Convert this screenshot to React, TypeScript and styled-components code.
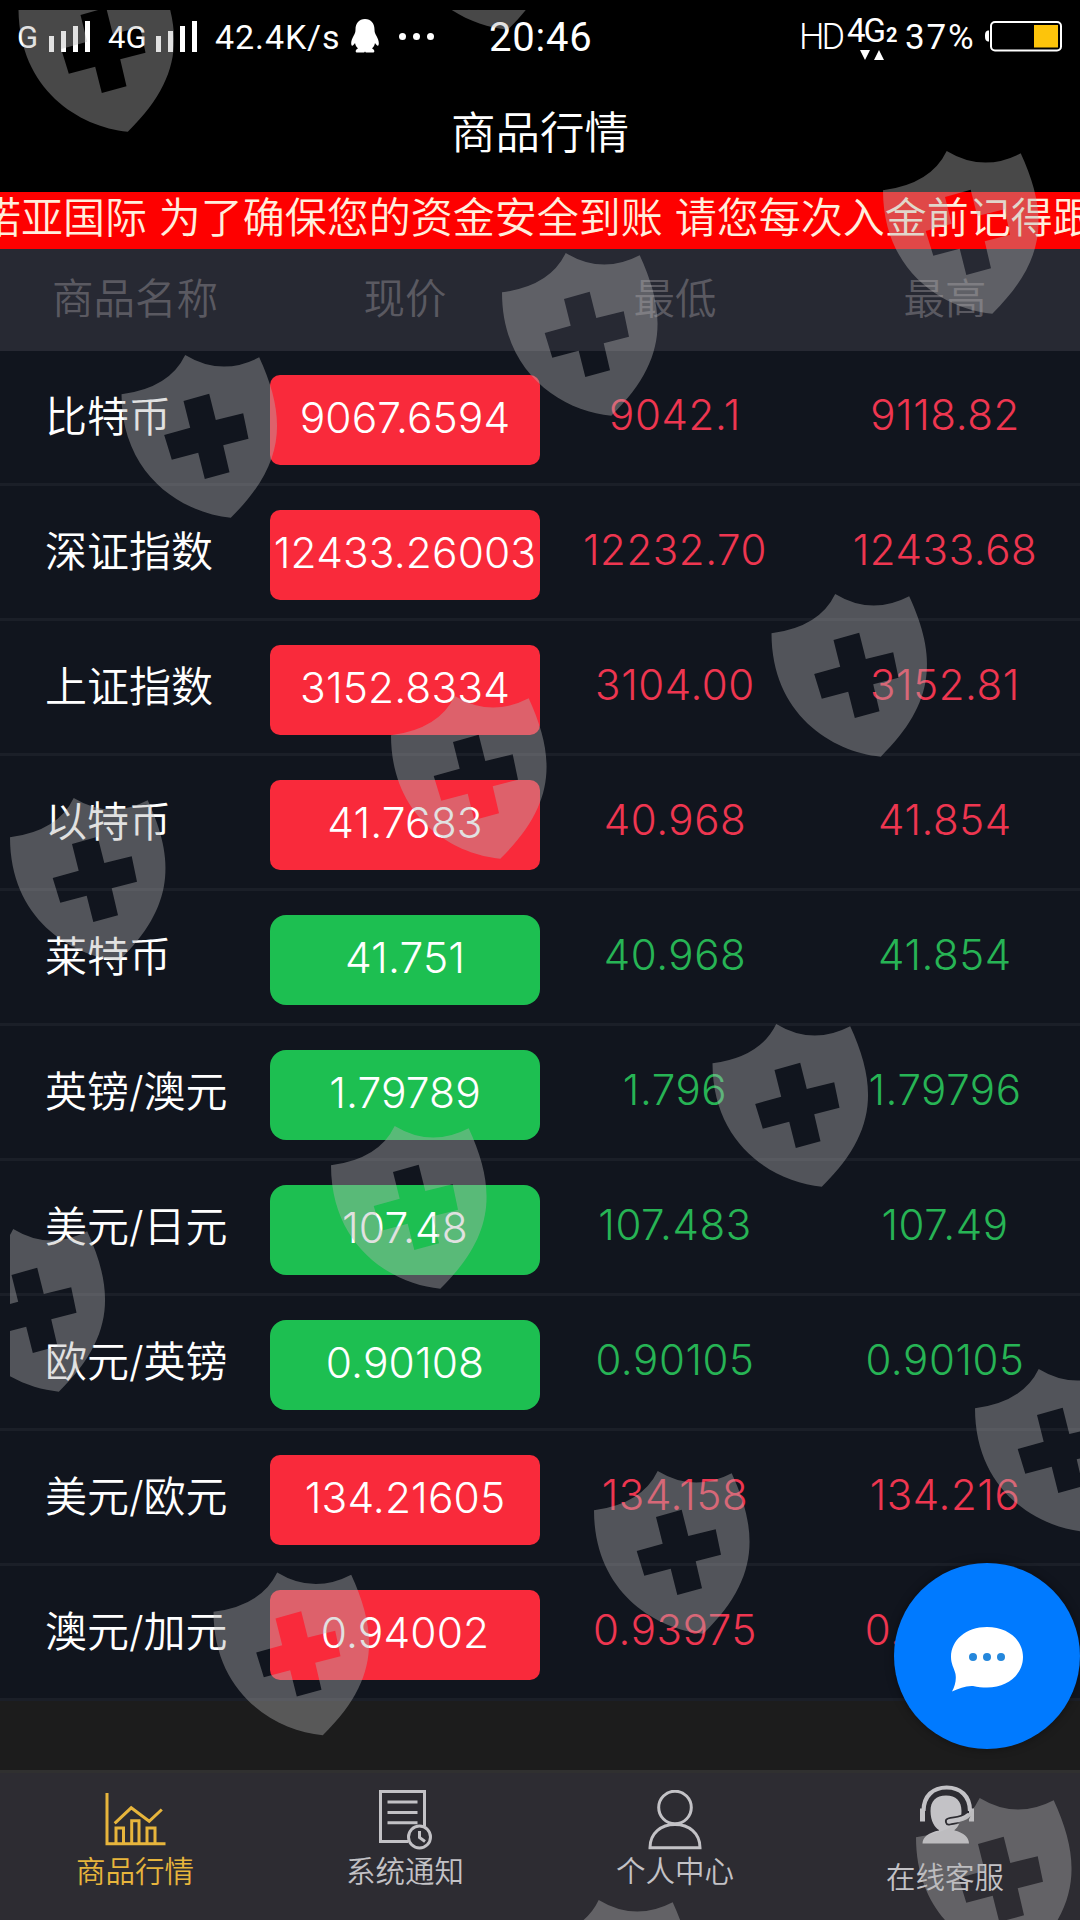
import { createGlobalStyle, styled } from 'styled-components';

type Trend = 'up' | 'down';

type Quote = {
  name: string;
  price: string;
  low: string;
  high: string;
  trend: Trend;
};

const QUOTES: Quote[] = [
  { name: '比特币', price: '9067.6594', low: '9042.1', high: '9118.82', trend: 'up' },
  { name: '深证指数', price: '12433.26003', low: '12232.70', high: '12433.68', trend: 'up' },
  { name: '上证指数', price: '3152.8334', low: '3104.00', high: '3152.81', trend: 'up' },
  { name: '以特币', price: '41.7683', low: '40.968', high: '41.854', trend: 'up' },
  { name: '莱特币', price: '41.751', low: '40.968', high: '41.854', trend: 'down' },
  { name: '英镑/澳元', price: '1.79789', low: '1.796', high: '1.79796', trend: 'down' },
  { name: '美元/日元', price: '107.48', low: '107.483', high: '107.49', trend: 'down' },
  { name: '欧元/英镑', price: '0.90108', low: '0.90105', high: '0.90105', trend: 'down' },
  { name: '美元/欧元', price: '134.21605', low: '134.158', high: '134.216', trend: 'up' },
  { name: '澳元/加元', price: '0.94002', low: '0.93975', high: '0.94012', trend: 'up' },
];

// top-left corner of every watermark badge
const SHIELDS = [
  [18.5, -31],
  [398.5, -133],
  [883, 151],
  [502, 253],
  [121.5, 355],
  [771.5, 594],
  [391, 696],
  [10, 798],
  [712.5, 1024],
  [331, 1126],
  [-50.5, 1229],
  [975, 1369],
  [594, 1471],
  [213.5, 1572.5],
  [916, 1798],
  [535, 1900],
];

const SHIELD_PATH =
  'M63.7 0Q100 22 137.7 2.3C165 62 165 108 109.3 162.7C60 158 0 120 0 39.3Q48 33 63.7 0Z' +
  'M62 46L68.7 72.7L42.7 80L50.3 104.7L76.7 97.7L83.3 124L108 117.3L101.7 90.3L127 83.7L121.7 58.3L94.3 65L87.7 38.7Z';

const Signal = () => (
  <svg width="42" height="31" viewBox="0 0 42 31" fill="#fff">
    <path d="M0 15h5v16H0zM12 10h5v21h-5zM24 5h5v26h-5zM36 0h5v31h-5z" />
  </svg>
);

const Penguin = () => (
  <svg width="28" height="34" viewBox="0 0 28 34" fill="#fff">
    <path d="M14 0C8 0 4.500 4.500 4.500 10.500C4.500 13 4 14.500 2.500 17C.5 20.500-.5 24.500.7 26.500C1.500 27.500 3 25.500 4 24C4.500 26.500 5.500 28 7 29.500C4.500 30.500 4 33 5.500 33.500H13.200L14 32.500L14.800 33.500H22.500C24 33 23.500 30.500 21 29.500C22.500 28 23.500 26.500 24 24C25 25.500 26.500 27.500 27.300 26.500C28.500 24.500 27.500 20.500 25.500 17C24 14.500 23.500 13 23.500 10.500C23.500 4.500 20 0 14 0Z" />
  </svg>
);

const Battery = () => (
  <svg width="78" height="32" viewBox="0 0 78 32">
    <path d="M5 10.500C2 10.500 1 12 1 16s1 5.500 4 5.500z" fill="#fff" />
    <rect x="7" y="2" width="70" height="28.500" rx="4" fill="none" stroke="#fff" strokeWidth="2" />
    <rect x="50" y="5" width="24" height="22.500" fill="#fdc40b" />
  </svg>
);

const ChartIcon = () => (
  <svg width="62" height="54" viewBox="0 0 62 54" fill="none" stroke="currentColor" strokeWidth="3">
    <path d="M3 1V51.700H61.500" />
    <path d="M10.700 31.300L27.200 15.800L45.200 29.300L57.800 17.500" />
    <path d="M12 51V36H19.500V51M27.700 51V28.700H35V51M43 51V36H51V51" />
  </svg>
);

const NoticeIcon = () => (
  <svg width="54" height="60" viewBox="0 0 54 60" fill="none" stroke="currentColor" strokeWidth="3">
    <path d="M30 51.500H2.500V1.500H46.500V36" />
    <path d="M9.500 12H39.500M9.500 22.500H39.500M9.500 32.700H39.500" />
    <circle cx="41.500" cy="47" r="11" />
    <path d="M41.500 41V47.500L47 51.500" />
  </svg>
);

const UserIcon = () => (
  <svg width="54" height="60" viewBox="0 0 54 60" fill="none" stroke="currentColor" strokeWidth="3">
    <circle cx="27" cy="17.500" r="16.300" />
    <path d="M2 57.700C2 43 13 34.500 27 34.500S52 43 52 57.700Z" />
  </svg>
);

const ServiceIcon = () => (
  <svg width="58" height="60" viewBox="-4 0 58 60">
    <path d="M3.500 26C3.500 11 13 2.500 26.700 2.500S50 11 50 26" fill="none" stroke="currentColor" strokeWidth="4.200" />
    <path d="M0 23.500H5V36.500H0zM49 23.500H54V36.500H49z" fill="currentColor" />
    <path
      d="M26 10.500C16 10.500 10.500 16 10.500 26C10.500 36 15 43 19 45V45.500C9 47.500 2.500 52 2.500 58.500H49C49 52 43 47.500 34.500 45.500V45C38.500 42 41.500 36 41.500 26C41.500 16 36 10.500 26 10.500Z"
      fill="currentColor"
    />
    <path d="M46 31.500C41 36 34 35 29 36.500" fill="none" stroke="#2d2c32" strokeWidth="8" strokeLinecap="round" />
    <path d="M48 30.500C42 36 34 35 29 36.500" fill="none" stroke="currentColor" strokeWidth="4.500" strokeLinecap="round" />
  </svg>
);

const TABS = [
  { label: '商品行情', Icon: ChartIcon, active: true, top: 22, gap: 7 },
  { label: '系统通知', Icon: NoticeIcon, active: false, top: 20, gap: 3 },
  { label: '个人中心', Icon: UserIcon, active: false, top: 20, gap: 3 },
  { label: '在线客服', Icon: ServiceIcon, active: false, top: 15, gap: 14 },
];

const App = () => {
  return (
    <S.Page>
      <GlobalStyle />
      <S.StatusBar>
        <S.StatusText $left={17} $size={31}>G</S.StatusText>
        <S.StatusIcon $left={49} $top={21}><Signal /></S.StatusIcon>
        <S.StatusText $left={108} $size={31}>4G</S.StatusText>
        <S.StatusIcon $left={156} $top={21}><Signal /></S.StatusIcon>
        <S.StatusText $left={215} $size={34} $spacing={0.9}>42.4K/s</S.StatusText>
        <S.StatusIcon $left={351} $top={19}><Penguin /></S.StatusIcon>
        <S.Dots><i /><i /><i /></S.Dots>
        <S.StatusText $left={489} $size={40} $spacing={0.8}>20:46</S.StatusText>
        <S.StatusText $left={799} $size={36} $spacing={-3} $light>HD</S.StatusText>
        <S.Network>
          <span>4G<b>2</b></span>
          <svg width="24" height="10" viewBox="0 0 24 10" fill="#fff">
            <path d="M0 0H10L5 10ZM14 10H24L19 0Z" />
          </svg>
        </S.Network>
        <S.StatusText $left={905} $size={35} $spacing={1.8}>37%</S.StatusText>
        <S.StatusIcon $left={984} $top={20}><Battery /></S.StatusIcon>
      </S.StatusBar>
      <S.TitleBar>商品行情</S.TitleBar>
      <S.Notice>
        <span>诺亚国际 为了确保您的资金安全到账 请您每次入金前记得跟</span>
      </S.Notice>
      <S.TableHead>
        <span>商品名称</span>
        <span>现价</span>
        <span>最低</span>
        <span>最高</span>
      </S.TableHead>
      <S.List>
        {QUOTES.map(({ name, price, low, high, trend }) => (
          <S.Row key={name}>
            <S.Name>{name}</S.Name>
            <S.Price $trend={trend}>{price}</S.Price>
            <S.Value $trend={trend}>{low}</S.Value>
            <S.Value $trend={trend}>{high}</S.Value>
          </S.Row>
        ))}
      </S.List>
      <S.TabBar>
        {TABS.map(({ label, Icon, active, top, gap }) => (
          <S.Tab key={label} $active={active} $top={top} $gap={gap}>
            <Icon />
            <span>{label}</span>
          </S.Tab>
        ))}
      </S.TabBar>
      <S.Watermark viewBox="10 10 1070 1910">
        {SHIELDS.map(([x, y]) => (
          <path key={`${x},${y}`} d={SHIELD_PATH} fillRule="evenodd" transform={`translate(${x} ${y})`} />
        ))}
      </S.Watermark>
      <S.ChatButton>
        <svg width="74" height="66" viewBox="0 0 74 66">
          <path
            d="M37 1C16 1 1 14 1 31C1 38 4 42 5.500 48C6.500 54 5 60 2 65.500C9 62.500 16 59.500 23 60C28 61 32 61.500 37 61.500C58 61.500 73 48 73 31S58 1 37 1Z"
            fill="#fff"
          />
          <g fill="#2487dc">
            <circle cx="23" cy="31" r="4" />
            <circle cx="37" cy="31" r="4" />
            <circle cx="51" cy="31" r="4" />
          </g>
        </svg>
      </S.ChatButton>
    </S.Page>
  );
};

export default App;

const GlobalStyle = createGlobalStyle`
  * {
    box-sizing: border-box;
  }
  body {
    margin: 0;
    background: #1c1c1c;
  }
`;

const trendColor = ({ $trend }: { $trend: Trend }) =>
  $trend === 'up' ? '#ee3650' : '#27b455';

const S = {
  Page: styled.div`
    position: relative;
    display: flex;
    flex-direction: column;
    width: 1080px;
    height: 1920px;
    overflow: hidden;
    background: #1c1c1c;
    color: #fff;
    font-family: Inter, 'Noto Sans CJK SC', sans-serif;
    font-weight: 350;
    white-space: nowrap;
  `,
  StatusBar: styled.div`
    position: relative;
    flex: none;
    height: 72px;
    background: #000;
    font-family: Roboto, sans-serif;
    font-weight: 400;
  `,
  StatusText: styled.span<{ $left: number; $size: number; $spacing?: number; $light?: boolean }>`
    position: absolute;
    top: 0;
    left: ${({ $left }) => $left}px;
    font-size: ${({ $size }) => $size}px;
    font-weight: ${({ $light }) => ($light ? 300 : 400)};
    letter-spacing: ${({ $spacing = 0 }) => $spacing}px;
    line-height: 75px;
  `,
  StatusIcon: styled.span<{ $left: number; $top: number }>`
    position: absolute;
    top: ${({ $top }) => $top}px;
    left: ${({ $left }) => $left}px;
    display: flex;
  `,
  Dots: styled.span`
    position: absolute;
    top: 33px;
    left: 399px;
    display: flex;
    gap: 7px;

    i {
      width: 7px;
      height: 7px;
      border-radius: 50%;
      background: #fff;
    }
  `,
  Network: styled.span`
    position: absolute;
    top: 16px;
    left: 847px;
    display: flex;
    flex-direction: column;
    font-size: 33px;
    letter-spacing: -2px;
    line-height: 30px;

    b {
      margin-left: 2px;
      font-size: 20px;
      font-weight: 700;
    }

    svg {
      margin-left: 13px;
    }
  `,
  TitleBar: styled.div`
    flex: none;
    height: 120px;
    background: #000;
    font-size: 44.500px;
    line-height: 122px;
    text-align: center;
  `,
  Notice: styled.div`
    display: flex;
    flex: none;
    height: 57px;
    overflow: hidden;
    background: #fe0000;
    color: #ffeedd;
    font-size: 42px;
    line-height: 52px;

    span {
      margin-left: -21px;
    }
  `,
  TableHead: styled.div`
    display: grid;
    flex: none;
    grid-template-columns: repeat(4, 270px);
    height: 102px;
    background: #272933;
    color: #5a5961;
    font-size: 41.500px;
    line-height: 101px;
    text-align: center;
  `,
  List: styled.div`
    flex: none;
    background: #11151e;
  `,
  Row: styled.div`
    display: grid;
    grid-template-columns: repeat(4, 270px);
    height: 135px;
    border-bottom: 3px solid #1b1f28;
    font-size: 42px;
    line-height: 128px;
    text-align: center;
  `,
  Name: styled.span`
    padding-left: 45px;
    line-height: 131px;
    text-align: left;
  `,
  Price: styled.span<{ $trend: Trend }>`
    height: 90px;
    margin-top: 24px;
    border-radius: ${({ $trend }) => ($trend === 'up' ? 10 : 16)}px;
    background: ${({ $trend }) => ($trend === 'up' ? '#f92a3b' : '#1dbf51')};
    font-size: 42.500px;
    font-weight: 300;
    letter-spacing: 0.1px;
    line-height: 86px;
  `,
  Value: styled.span<{ $trend: Trend }>`
    color: ${trendColor};
    font-weight: 300;
    letter-spacing: 0.6px;
  `,
  TabBar: styled.div`
    display: grid;
    grid-template-columns: repeat(4, 270px);
    height: 150px;
    margin-top: auto;
    border-top: 3px solid #303030;
    background: #2d2c32;
  `,
  Tab: styled.div<{ $active: boolean; $top: number; $gap: number }>`
    display: flex;
    flex-direction: column;
    align-items: center;
    padding-top: ${({ $top }) => $top - 3}px;
    color: ${({ $active }) => ($active ? '#e7b53c' : '#c3c2c6')};

    svg {
      flex: none;
    }

    span {
      margin-top: ${({ $gap }) => $gap}px;
      font-size: 29.500px;
      line-height: 36px;
    }
  `,
  Watermark: styled.svg`
    position: absolute;
    top: 10px;
    left: 10px;
    width: 1070px;
    height: 1910px;
    fill: rgba(180, 180, 180, 0.4);
    pointer-events: none;
  `,
  ChatButton: styled.div`
    position: absolute;
    top: 1563px;
    left: 894px;
    display: flex;
    align-items: center;
    justify-content: center;
    width: 186px;
    height: 186px;
    padding-top: 6px;
    border-radius: 50%;
    background: #007aff;
    box-shadow: 0 0 10px rgba(0, 0, 0, 0.4);
  `,
};
